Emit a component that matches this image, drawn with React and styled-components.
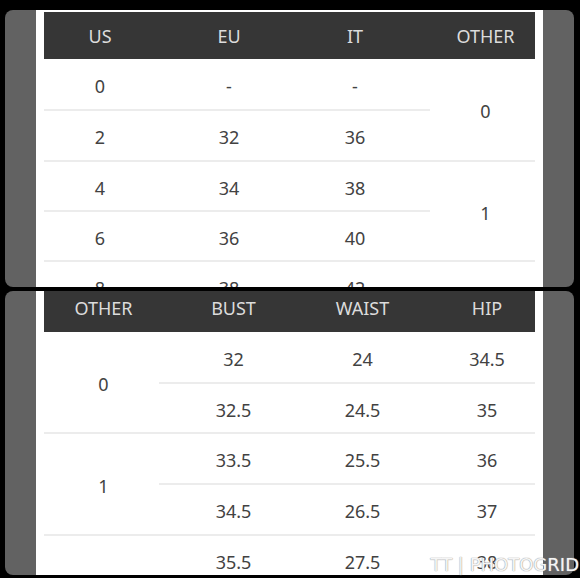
import { Fragment } from 'react';
import styled, { createGlobalStyle } from 'styled-components';

const Global = createGlobalStyle`
  html, body {
    margin: 0;
    padding: 0;
    background: #000;
  }
`;

const topHead = [
  { label: 'US' },
  { label: 'EU' },
  { label: 'IT', pr: 22 },
  { label: 'OTHER', pl: 6 },
];

const topRows = [
  ['0', '-', '-'],
  ['2', '32', '36'],
  ['4', '34', '38'],
  ['6', '36', '40'],
  ['8', '38', '42'],
];

// only the merged cells that show in the crop
const topOther = ['0', '1'];

const bottomHead = [
  { label: 'OTHER', pl: 4 },
  { label: 'BUST', pl: 24 },
  { label: 'WAIST', pl: 32 },
  { label: 'HIP', pl: 30 },
];

const bottomRows = [
  ['32', '24', '34.5'],
  ['32.5', '24.5', '35'],
  ['33.5', '25.5', '36'],
  ['34.5', '26.5', '37'],
  ['35.5', '27.5', '38'],
];

const bottomOther = ['0', '1'];

const App = () => {
  return (
    <Page>
      <Global />
      <Frame $h={277}>
        <Sheet $top={2}>
          <Table $cols="112px 146px 128px 105px" $rows="47px 52px 51px 50px 50px 50px">
            {topHead.map((h) => (
              <HeadCell key={h.label} $pl={h.pl} $pr={h.pr}>
                {h.label}
              </HeadCell>
            ))}
            {topRows.map((r, i) => (
              <Fragment key={i}>
                <Cell $col={1} $row={i + 2} $line>{r[0]}</Cell>
                <Cell $col={2} $row={i + 2} $line>{r[1]}</Cell>
                <Cell $col={3} $row={i + 2} $line $pr={22}>{r[2]}</Cell>
              </Fragment>
            ))}
            {topOther.map((v, i) => (
              <Cell key={'o' + i} $col={4} $row={i * 2 + 2} $span={2} $line $pl={6}>
                {v}
              </Cell>
            ))}
          </Table>
        </Sheet>
      </Frame>
      <Frame $h={284}>
        <Sheet $top={0}>
          <Table $cols="115px 125px 125px 126px" $rows="41px 52px 50px 51px 51px 51px">
            {bottomHead.map((h) => (
              <HeadCell key={h.label} $pl={h.pl} $pb={8}>
                {h.label}
              </HeadCell>
            ))}
            {bottomOther.map((v, i) => (
              <Cell key={'o' + i} $col={1} $row={i * 2 + 2} $span={2} $line $pl={4}>
                {v}
              </Cell>
            ))}
            {bottomRows.map((r, i) => (
              <Fragment key={i}>
                <Cell $col={2} $row={i + 2} $line $pl={24}>{r[0]}</Cell>
                <Cell $col={3} $row={i + 2} $line $pl={32}>{r[1]}</Cell>
                <Cell $col={4} $row={i + 2} $line $pl={30}>{r[2]}</Cell>
              </Fragment>
            ))}
          </Table>
        </Sheet>
      </Frame>
      <Watermark>TT | PHOTOGRID</Watermark>
    </Page>
  );
};

const Page = styled.div`
  position: relative;
  box-sizing: border-box;
  width: 580px;
  height: 578px;
  padding: 10px 6px 3px 5px;
  background: #000;
  display: flex;
  flex-direction: column;
  gap: 4px;
  overflow: hidden;
  font-family: 'Noto Sans', 'Open Sans', sans-serif;
`;

const Frame = styled.div`
  box-sizing: border-box;
  flex: none;
  height: ${(p) => p.$h}px;
  padding: 0 31px;
  background: #626262;
  border-radius: 8px;
  overflow: hidden;
`;

const Sheet = styled.div`
  box-sizing: border-box;
  height: 100%;
  padding: ${(p) => p.$top}px 8px 0;
  background: #fff;
  overflow: hidden;
`;

const Table = styled.div`
  display: grid;
  grid-template-columns: ${(p) => p.$cols};
  grid-template-rows: ${(p) => p.$rows};
`;

const HeadCell = styled.div`
  display: flex;
  align-items: center;
  justify-content: center;
  box-sizing: border-box;
  padding: 0 ${(p) => p.$pr || 0}px ${(p) => p.$pb || 0}px ${(p) => p.$pl || 0}px;
  background: #363636;
  color: #dcdcdc;
  font-size: 18px;
`;

const Cell = styled.div`
  grid-column: ${(p) => p.$col};
  grid-row: ${(p) => p.$row} / span ${(p) => p.$span || 1};
  display: flex;
  align-items: center;
  justify-content: center;
  box-sizing: border-box;
  padding: 3px ${(p) => p.$pr || 0}px 0 ${(p) => p.$pl || 0}px;
  border-bottom: ${(p) => (p.$line ? '2px solid #ececec' : 'none')};
  color: #424242;
  font-size: 18px;
`;

const Watermark = styled.div`
  position: absolute;
  right: 1px;
  bottom: 3px;
  color: rgba(255, 255, 255, 0.92);
  font-family: 'DejaVu Sans', sans-serif;
  font-size: 18px;
  text-shadow: 0 0 1px #9a9a9a, 0 0 1px #9a9a9a;
`;

export default App;
